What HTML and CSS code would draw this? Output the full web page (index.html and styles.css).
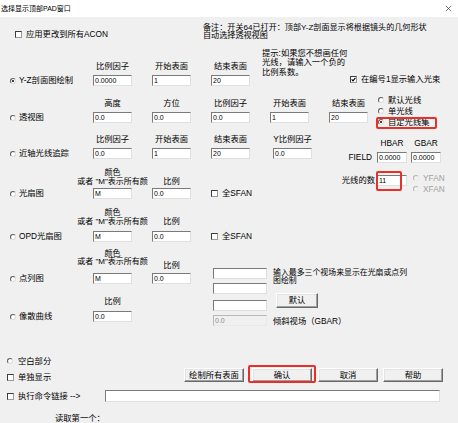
FILE: index.html
```html
<!DOCTYPE html>
<html lang="zh-CN">
<head>
<meta charset="utf-8">
<title>选择显示顶部PAD窗口</title>
<link rel="stylesheet" href="styles.css">
</head>
<body>
<div class="titlebar">
  <span class="title">选择显示顶部PAD窗口</span>
  <svg class="close" viewBox="0 0 8 8"><path d="M1 1L7 7M7 1L1 7"/></svg>
</div>

<div class="band band-a">
  <div class="chk acon"><span class="box"></span>应用更改到所有ACON</div>
  <div class="note">备注：开关64已打开：顶部Y-Z剖面显示将根据镜头的几何形状<br>自动选择透视视图</div>
</div>

<div class="band band-b">
  <div class="opt"><span class="rd on"></span>Y-Z剖面图绘制</div>
  <div class="cols">
    <div class="col"><div class="lab">比例因子</div><div class="tb">0.0000</div></div>
    <div class="col"><div class="lab">开始表面</div><div class="tb">1</div></div>
    <div class="col"><div class="lab">结束表面</div><div class="tb">20</div></div>
  </div>
  <div class="hint">提示:如果您不想画任何<br>光线，请输入一个负的<br>比例系数。</div>
  <div class="chk show1"><span class="box"><svg viewBox="0 0 5 5"><path d="M0.7 2.4L2 3.8L4.4 0.9"/></svg></span>在编号1显示输入光束</div>
</div>

<div class="band band-c">
  <div class="opt"><span class="rd"></span>透视图</div>
  <div class="cols">
    <div class="col"><div class="lab">高度</div><div class="tb">0.0</div></div>
    <div class="col"><div class="lab">方位</div><div class="tb">0.0</div></div>
    <div class="col"><div class="lab">比例因子</div><div class="tb">0.0</div></div>
    <div class="col"><div class="lab">开始表面</div><div class="tb">1</div></div>
    <div class="col"><div class="lab">结束表面</div><div class="tb">20</div></div>
  </div>
  <div class="raygrp">
    <div class="ropt"><span class="rd"></span>默认光线</div>
    <div class="ropt"><span class="rd"></span>单光线</div>
    <div class="ropt mark"><span class="rd on"></span>自定光线集</div>
  </div>
</div>

<div class="band band-d">
  <div class="opt"><span class="rd"></span>近轴光线追踪</div>
  <div class="cols">
    <div class="col"><div class="lab">比例因子</div><div class="tb">0.0</div></div>
    <div class="col"><div class="lab">开始表面</div><div class="tb">1</div></div>
    <div class="col"><div class="lab">结束表面</div><div class="tb">20</div></div>
    <div class="col shift"><div class="lab">Y比例因子</div><div class="tb">0.0</div></div>
  </div>
  <div class="fblock">
    <span></span><span class="hd">HBAR</span><span class="hd">GBAR</span>
    <span class="fl">FIELD</span><div class="tb s">0.0000</div><div class="tb s">0.0000</div>
  </div>
</div>

<div class="band band-e">
  <div class="opt"><span class="rd"></span>光扇图</div>
  <div class="cols">
    <div class="col"><div class="lab two">颜色<br>或者 "M"表示所有颜</div><div class="tb">M</div></div>
    <div class="col"><div class="lab">比例</div><div class="tb">0.0</div></div>
    <div class="chk sfan"><span class="box"></span>全SFAN</div>
  </div>
  <div class="raycnt">
    <span class="rl">光线的数</span>
    <div class="tb s mark2">11</div>
    <div class="fans">
      <div class="ropt dis"><span class="rd"></span>YFAN</div>
      <div class="ropt dis"><span class="rd"></span>XFAN</div>
    </div>
  </div>
</div>

<div class="band band-f">
  <div class="opt"><span class="rd"></span>OPD光扇图</div>
  <div class="cols">
    <div class="col"><div class="lab two">颜色<br>或者 "M"表示所有颜</div><div class="tb">M</div></div>
    <div class="col"><div class="lab">比例</div><div class="tb">0.0</div></div>
    <div class="chk sfan"><span class="box"></span>全SFAN</div>
  </div>
</div>

<div class="band-gh">
  <div class="gleft">
    <div class="band band-g">
      <div class="opt"><span class="rd"></span>点列图</div>
      <div class="cols">
        <div class="col"><div class="lab two">颜色<br>或者 "M"表示所有颜</div><div class="tb">M</div></div>
        <div class="col"><div class="lab">比例</div><div class="tb">0.0</div></div>
      </div>
    </div>
    <div class="band band-h">
      <div class="opt"><span class="rd"></span>像散曲线</div>
      <div class="cols">
        <div class="col"><div class="lab">比例</div><div class="tb">0.0</div></div>
      </div>
    </div>
  </div>
  <div class="fields">
    <div class="fin">
      <div class="tb"></div>
      <div class="tb"></div>
      <div class="tb g6"></div>
      <div class="tb dis">0.0</div>
    </div>
    <div class="ftext">
      <div class="fnote">输入最多三个视场来显示在光扇或点列<br>图绘制</div>
      <div class="btn dflt">默认</div>
      <div class="gbar">倾斜视场（GBAR）</div>
    </div>
  </div>
</div>

<div class="bottom">
  <div class="r1"><span class="rd"></span>空白部分</div>
  <div class="r2">
    <div class="chk solo"><span class="box"></span>单独显示</div>
    <div class="btns">
      <div class="btn">绘制所有表面</div>
      <div class="btn b2 mark3">确认</div>
      <div class="btn b3">取消</div>
      <div class="btn b4">帮助</div>
    </div>
  </div>
  <div class="r3">
    <div class="chk exec"><span class="box"></span>执行命令链接 --&gt;</div>
    <div class="tb cmd"></div>
  </div>
  <div class="read">读取第一个：</div>
</div>
</body>
</html>
```

FILE: styles.css
```css
* { box-sizing: border-box; margin: 0; padding: 0; }
html, body { width: 458px; height: 423px; overflow: hidden; }
body {
  background: #f0f0f0;
  color: #000;
  font-family: "Liberation Sans", "Noto Sans CJK SC", sans-serif;
  font-size: 8.3px;
  line-height: 9px;
}

/* title bar */
.titlebar {
  height: 17px; background: #fff;
  display: flex; align-items: center; justify-content: space-between;
  padding: 0 6px 1px 1px;
}
.title { font-size: 7px; line-height: 9px; white-space: nowrap; }
.close { width: 7px; height: 7px; }
.close path { stroke: #333; stroke-width: 0.8; fill: none; }

/* bands */
.band { display: flex; align-items: flex-end; }
.band-a { height: 31px; align-items: flex-start; }
.band-b { height: 40px; padding-bottom: 2px; }
.band-c { height: 38px; padding-bottom: 3px; }
.band-d { height: 37px; padding-bottom: 4px; }
.band-e { height: 40px; padding-bottom: 4px; }
.band-f { height: 42px; padding-bottom: 3px; }
.band-g { height: 42px; padding-bottom: 3px; }
.band-h { height: 39px; padding-bottom: 4px; }

/* controls */
.chk { display: flex; align-items: center; white-space: nowrap; height: 9px; flex: none; }
.box {
  width: 7px; height: 7px; flex: none; margin-right: 4px;
  border: 1px solid; border-color: #3c3c3c #9a9a9a #9a9a9a #3c3c3c;
  background: #fff;
  display: flex; align-items: center; justify-content: center;
}
.box svg { width: 5px; height: 5px; }
.box path { fill: none; stroke: #000; stroke-width: 1.1; }

.rd {
  width: 6px; height: 6px; border-radius: 50%; flex: none; margin-right: 3px;
  border: 1px solid; border-color: #5f5f5f #dcdcdc #dcdcdc #5f5f5f;
  background: #fff;
  display: flex; align-items: center; justify-content: center;
}
.rd.on::after { content: ""; width: 2px; height: 2px; border-radius: 50%; background: #000; }

.opt {
  width: 93px; height: 11px; padding-left: 10px; flex: none;
  display: flex; align-items: center; white-space: nowrap;
}

.tb {
  width: 39px; height: 11px; flex: none;
  border: 1px solid; border-color: #7a7a7a #dfdfdf #dfdfdf #7a7a7a;
  background: #fff;
  font-size: 7px; line-height: 9px; padding-left: 1px;
  white-space: nowrap; display: flex; align-items: center;
}
.tb.s { width: 30px; }
.tb.dis { background: #f0f0f0; color: #8d8d8d; border-color: #b9b9b9 #e8e8e8 #e8e8e8 #b9b9b9; }

.cols { display: flex; align-items: flex-end; gap: 20px; flex: none; }
.col { width: 39px; display: flex; flex-direction: column; align-items: center; }
.col.shift { margin-left: 3px; }
.lab { white-space: nowrap; text-align: center; margin-bottom: 4.5px; }
.lab.two { font-size: 8px; line-height: 9px; }
.band-d .lab { margin-bottom: 4px; }
.band-e .lab { margin-bottom: 2px; }
.band-f .lab { margin-bottom: 5px; }
.band-f .lab.two { line-height: 9px; margin-bottom: 5px; }
.band-g .lab { margin-bottom: 3.5px; }
.band-g .lab.two { line-height: 8.5px; margin-bottom: 6.5px; }
.band-h .lab { margin-bottom: 5px; }

/* band a */
.acon { margin: 12.5px 0 0 15px; width: 188px; }
.note { margin-top: 6.5px; font-size: 8.1px; line-height: 8.8px; white-space: nowrap; }

/* band b */
.hint { align-self: flex-start; margin: 0.5px 0 0 12px; width: 88px; line-height: 9.5px; white-space: nowrap; flex: none; }
.show1 { align-self: flex-end; margin-bottom: 2.5px; }

/* band c ray group */
.raygrp {
  margin-left: auto; width: 80px; align-self: flex-start; margin-top: 7px;
  display: flex; flex-direction: column; gap: 1px;
}
.ropt { height: 10px; display: flex; align-items: center; white-space: nowrap; }
.ropt .rd { margin-right: 4px; }
.mark { position: relative; width: 57px; }
.mark::after {
  content: ""; position: absolute; left: -2px; right: -2px; top: 0; bottom: -2px;
  border: 2px solid #e8302a; border-radius: 2px;
}

/* band d field block */
.fblock {
  margin-left: auto; width: 117px; align-self: flex-start; margin-top: 12.5px;
  display: grid; grid-template-columns: 36px 34px 30px; row-gap: 4.5px; align-items: center;
}
.fblock .hd { width: 30px; text-align: center; }
.fl { text-align: right; padding-right: 5px; }

/* band e ray count */
.sfan { height: 11px; }
.raycnt {
  margin-left: auto; width: 117px; align-self: flex-start; margin-top: 12px;
  display: flex; align-items: flex-start;
}
.rl { width: 36px; text-align: right; padding-right: 2px; line-height: 11px; white-space: nowrap; }
.mark2 { position: relative; }
.mark2::after {
  content: ""; position: absolute; left: -2px; top: -5px; width: 22px; height: 16px;
  border: 2px solid #e8302a; border-radius: 2px;
}
.fans { margin-left: 6px; margin-top: -2.5px; display: flex; flex-direction: column; }
.fans .ropt { height: 11px; }
.dis { color: #a0a0a0; }
.ropt.dis .rd { border-color: #b5b5b5 #ececec #ececec #b5b5b5; background: #f4f4f4; }

/* bands g/h with field list */
.band-gh { display: flex; height: 81px; }
.gleft { width: 213px; flex: none; }
.fields { display: flex; margin-top: 23px; align-self: flex-start; }
.fin { display: flex; flex-direction: column; width: 54px; }
.fin .tb { width: 54px; }
.fin .tb + .tb { margin-top: 4px; }
.fin .tb.g6 { margin-top: 6px; }
.ftext { margin-left: 6px; display: flex; flex-direction: column; align-items: flex-start; }
.fnote { margin-top: 0.5px; font-size: 7.9px; line-height: 8.5px; white-space: nowrap; }
.dflt { margin: 7.5px 0 0 3px; width: 42px; height: 15px; }
.gbar { margin-top: 8.5px; white-space: nowrap; }

/* buttons */
.btn {
  width: 60px; height: 14px; flex: none;
  background: #f0f0f0;
  border: 1px solid; border-color: #fff #696969 #696969 #fff;
  box-shadow: inset -1px -1px #a0a0a0, inset 1px 1px #e3e3e3;
  display: flex; align-items: center; justify-content: center; white-space: nowrap;
}
.btn.dflt { width: 42px; height: 15px; }

/* bottom */
.bottom { padding-left: 7px; }
.r1 { margin-top: 30.5px; height: 9px; display: flex; align-items: center; white-space: nowrap; }
.r1 .rd { margin-right: 5px; }
.r2 { margin-top: 2.5px; height: 14px; display: flex; align-items: flex-start; }
.solo { width: 177px; margin-top: 4.5px; }
.btns { display: flex; }
.b2 { margin-left: 8px; }
.b3 { margin-left: 6px; }
.b4 { margin-left: 5px; }
.mark3 { position: relative; }
.mark3::after {
  content: ""; position: absolute; left: -5px; right: -5px; top: -4px; bottom: -2px;
  border: 2px solid #e8302a; border-radius: 2px;
}
.r3 { margin-top: 8px; height: 12px; display: flex; align-items: center; }
.exec { width: 98px; }
.cmd { width: 335px; height: 12px; }
.read { margin: 11.5px 0 0 48px; white-space: nowrap; }
```
